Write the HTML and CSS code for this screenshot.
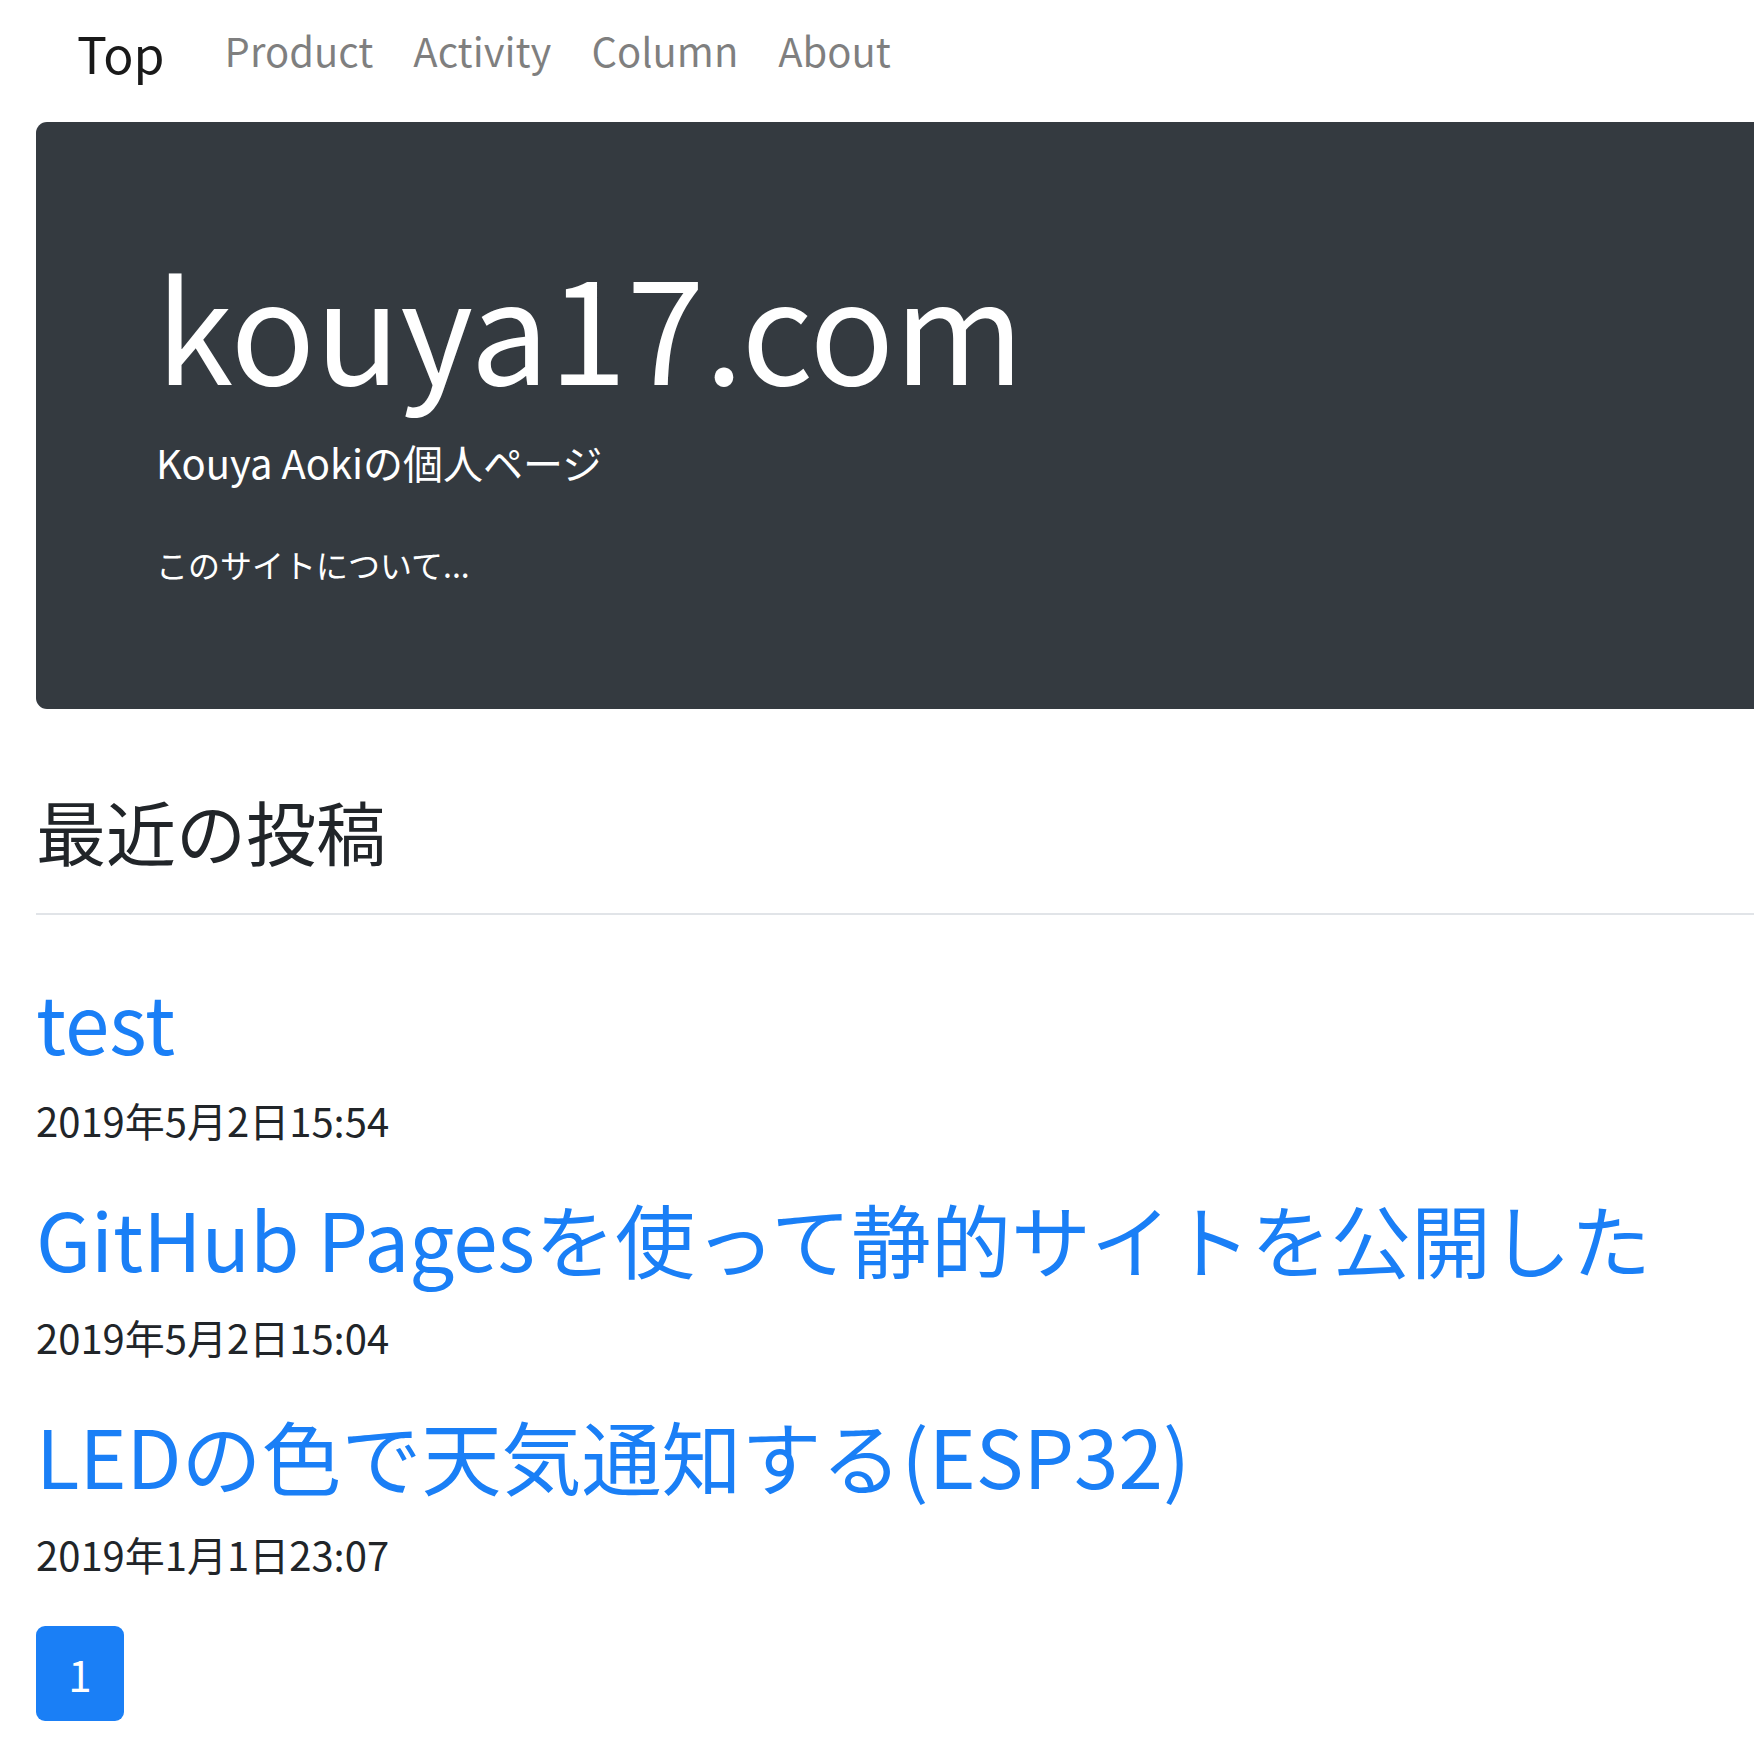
FILE: index.html
```html
<!DOCTYPE html>
<html lang="ja">
<head>
<meta charset="utf-8">
<title>kouya17.com</title>
<link rel="stylesheet" href="styles.css">
</head>
<body>
<nav class="navbar">
  <a class="brand" href="#">Top</a>
  <ul class="nav-links">
    <li><a href="#">Product</a></li>
    <li><a href="#">Activity</a></li>
    <li><a href="#">Column</a></li>
    <li><a href="#">About</a></li>
  </ul>
</nav>
<main class="page">
  <section class="jumbotron">
    <h1 class="display">kouya17.com</h1>
    <p class="lead">Kouya Aokiの個人ページ</p>
    <p class="about">このサイトについて...</p>
  </section>
  <h3 class="section-title">最近の投稿</h3>
  <hr class="divider">
  <article class="post">
    <h2 class="post-title"><a href="#">test</a></h2>
    <p class="post-date">2019年5月2日15:54</p>
  </article>
  <article class="post">
    <h2 class="post-title"><a href="#">GitHub Pagesを使って静的サイトを公開した</a></h2>
    <p class="post-date">2019年5月2日15:04</p>
  </article>
  <article class="post">
    <h2 class="post-title"><a href="#">LEDの色で天気通知する(ESP32)</a></h2>
    <p class="post-date">2019年1月1日23:07</p>
  </article>
  <ul class="pagination">
    <li><a class="page-link active" href="#">1</a></li>
  </ul>
</main>
</body>
</html>
```
FILE: styles.css
```css
html, body {
  margin: 0;
  padding: 0;
  overflow: hidden;
}
body {
  font-family: "Noto Sans CJK JP", "Noto Sans", sans-serif;
  color: #212529;
  background: #fff;
  width: 1754px;
}
a { text-decoration: none; }

.navbar {
  display: flex;
  align-items: flex-start;
  height: 122px;
  padding-left: 77px;
  box-sizing: border-box;
}
.brand {
  font-size: 50px;
  line-height: 60px;
  margin-top: 22px;
  color: rgba(0,0,0,0.9);
  margin-right: 60px;
}
.nav-links {
  display: flex;
  list-style: none;
  margin: 28px 0 0 0;
  padding: 0;
  gap: 40px;
}
.nav-links a {
  font-size: 40px;
  line-height: 45px;
  color: rgba(0,0,0,0.5);
}

.page {
  padding-left: 36px;
  width: 1900px;
}
.jumbotron {
  background: #343a40;
  color: #fff;
  border-radius: 11px;
  padding: 113px 120px 121px;
}
.display {
  font-size: 140px;
  font-weight: 400;
  line-height: 178px;
  margin: 0;
}
.lead {
  font-size: 40px;
  line-height: 58px;
  margin: 20px 0 0;
}
.about {
  font-size: 32px;
  line-height: 47px;
  margin: 50px 0 0;
}

.section-title {
  font-size: 70px;
  font-weight: 400;
  line-height: 1.2;
  margin: 80px 0 0;
}
.divider {
  border: 0;
  border-top: 2px solid #e1e4e8;
  margin: 40px 0 0;
}
.post-title {
  font-size: 80px;
  font-weight: 400;
  line-height: 98px;
  margin: 36px 0 0;
}
.post:first-of-type .post-title { margin-top: 56px; }
.post-title a { color: #1a7ff6; }
.post-date {
  font-size: 40px;
  line-height: 64px;
  margin: 19px 0 0;
}
.pagination {
  list-style: none;
  margin: 40px 0 0;
  padding: 0;
  display: flex;
}
.page-link {
  display: flex;
  align-items: center;
  justify-content: center;
  width: 88px;
  height: 95px;
  border-radius: 9px;
  font-size: 42px;
  color: #fff;
  background: #1a7ff6;
}
```
